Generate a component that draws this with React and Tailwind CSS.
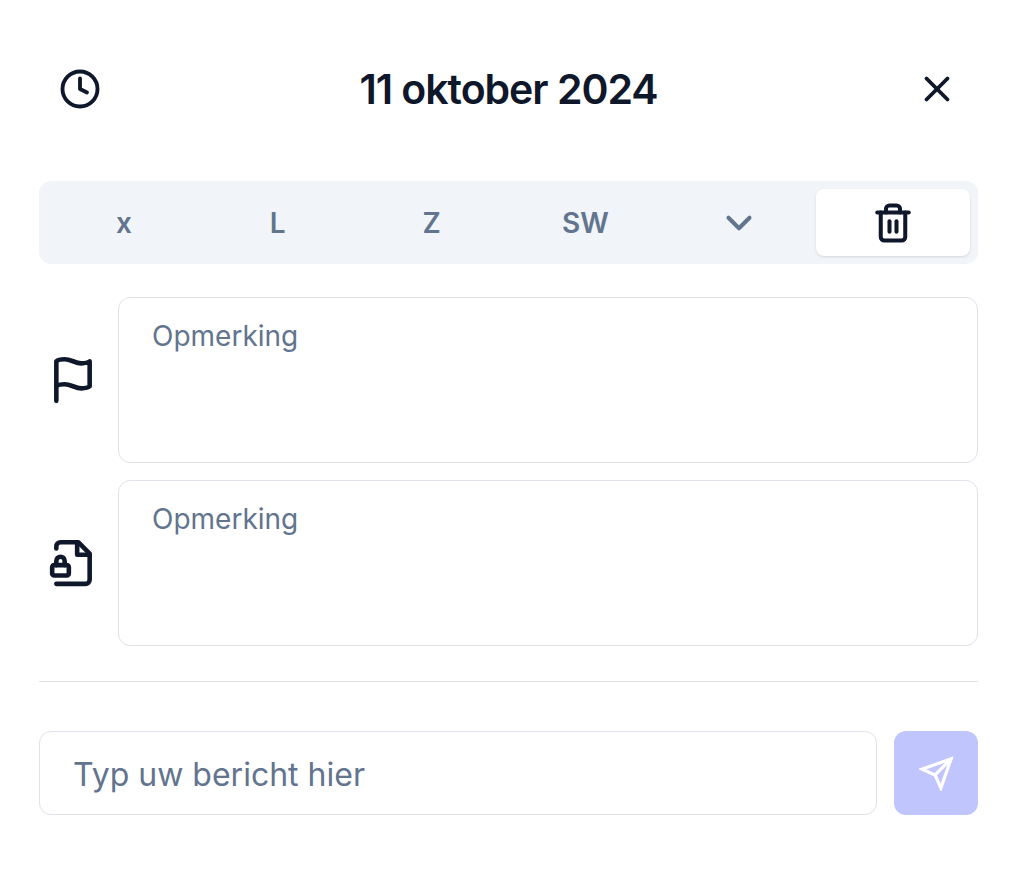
import { useState } from 'react';
import { ChevronDown, Clock, Trash2, X } from 'lucide-react';

function FlagIcon({ className }) {
  return (
    <svg viewBox="0 0 24 24" fill="none" stroke="currentColor" strokeWidth="2.2" strokeLinecap="round" strokeLinejoin="round" className={className} aria-hidden="true">
      <path d="M4 15s1-1 4-1 5 2 8 2 4-1 4-1V3s-1 1-4 1-5-2-8-2-4 1-4 1z" />
      <path d="M4 22v-7" />
    </svg>
  );
}

function FileLockIcon({ className }) {
  return (
    <svg viewBox="0 0 24 24" fill="none" stroke="currentColor" strokeWidth="2.2" strokeLinecap="round" strokeLinejoin="round" className={className} aria-hidden="true">
      <path d="M4 5V4a2 2 0 0 1 2-2h8.5L20 7.5V20a2 2 0 0 1-2 2H4" />
      <path d="M14 2v6h6" />
      <rect width="8" height="5" x="2" y="13" rx="1" />
      <path d="M8 13v-2a2 2 0 1 0-4 0v2" />
    </svg>
  );
}

function SendIcon({ className }) {
  return (
    <svg viewBox="0 0 24 24" fill="none" stroke="currentColor" strokeWidth="2.2" strokeLinecap="round" className={className} aria-hidden="true">
      <path d="m22 2-7 20-4-9-9-4Z" />
      <path d="M22 2 11 13" />
    </svg>
  );
}

const TABS = [
  { id: 'x', label: 'x' },
  { id: 'l', label: 'L' },
  { id: 'z', label: 'Z' },
  { id: 'sw', label: 'SW' },
  { id: 'more', icon: ChevronDown, title: 'Meer' },
  { id: 'delete', icon: Trash2, title: 'Verwijderen' },
];

function NoteField({ id, label, icon: Icon }) {
  return (
    <div className="flex items-center">
      <label htmlFor={id} aria-label={label} className="w-[79px] shrink-0 pl-[9px]">
        <Icon className="size-[50px]" />
      </label>
      <textarea
        id={id}
        placeholder="Opmerking"
        className="block h-[166px] min-w-0 flex-1 resize-none rounded-xl border border-[#dfe2ea] px-[33px] py-4 text-[28px] leading-[44px] outline-none placeholder:text-slate-500"
      />
    </div>
  );
}

export default function App() {
  const [active, setActive] = useState('delete');

  return (
    <main className="bg-white pt-16 pr-[42px] pb-14 pl-[39px] font-['Inter',sans-serif] text-slate-900">
      <header className="flex items-center justify-between px-5">
        <button type="button" aria-label="Geschiedenis">
          <Clock className="size-[42px]" strokeWidth={2.2} />
        </button>
        <h1 className="text-[41px] leading-[50px] font-semibold tracking-tight">11 oktober 2024</h1>
        <button type="button" aria-label="Sluiten">
          <X className="size-[42px]" strokeWidth={2.2} />
        </button>
      </header>

      <div role="tablist" className="mt-[67px] grid grid-cols-6 rounded-xl bg-slate-100 p-2">
        {TABS.map(({ id, label, icon: Icon, title }) => (
          <button
            key={id}
            type="button"
            role="tab"
            aria-selected={active === id}
            aria-label={title}
            onClick={() => setActive(id)}
            className={`flex h-[67px] items-center justify-center rounded-lg text-[28px] font-semibold ${
              active === id ? 'bg-white text-slate-900 shadow-sm' : 'text-slate-500'
            }`}
          >
            {Icon ? <Icon className="size-[42px]" strokeWidth={2.3} /> : label}
          </button>
        ))}
      </div>

      <div className="mt-[33px] flex flex-col gap-[17px]">
        <NoteField id="note" label="Opmerking" icon={FlagIcon} />
        <NoteField id="private-note" label="Interne opmerking" icon={FileLockIcon} />
      </div>

      <hr className="mt-[35px] border-[#dfe2ea]" />

      <form className="mt-[49px] flex gap-[17px]" onSubmit={(e) => e.preventDefault()}>
        <input
          type="text"
          aria-label="Bericht"
          placeholder="Typ uw bericht hier"
          className="h-[84px] min-w-0 flex-1 rounded-xl border border-[#dfe2ea] px-[33px] pt-0.5 text-[32px] outline-none placeholder:text-slate-500"
        />
        <button type="submit" aria-label="Versturen" className="flex size-[84px] shrink-0 items-center justify-center rounded-xl bg-[#c0c5fd] text-white">
          <SendIcon className="size-[35px]" />
        </button>
      </form>
    </main>
  );
}
